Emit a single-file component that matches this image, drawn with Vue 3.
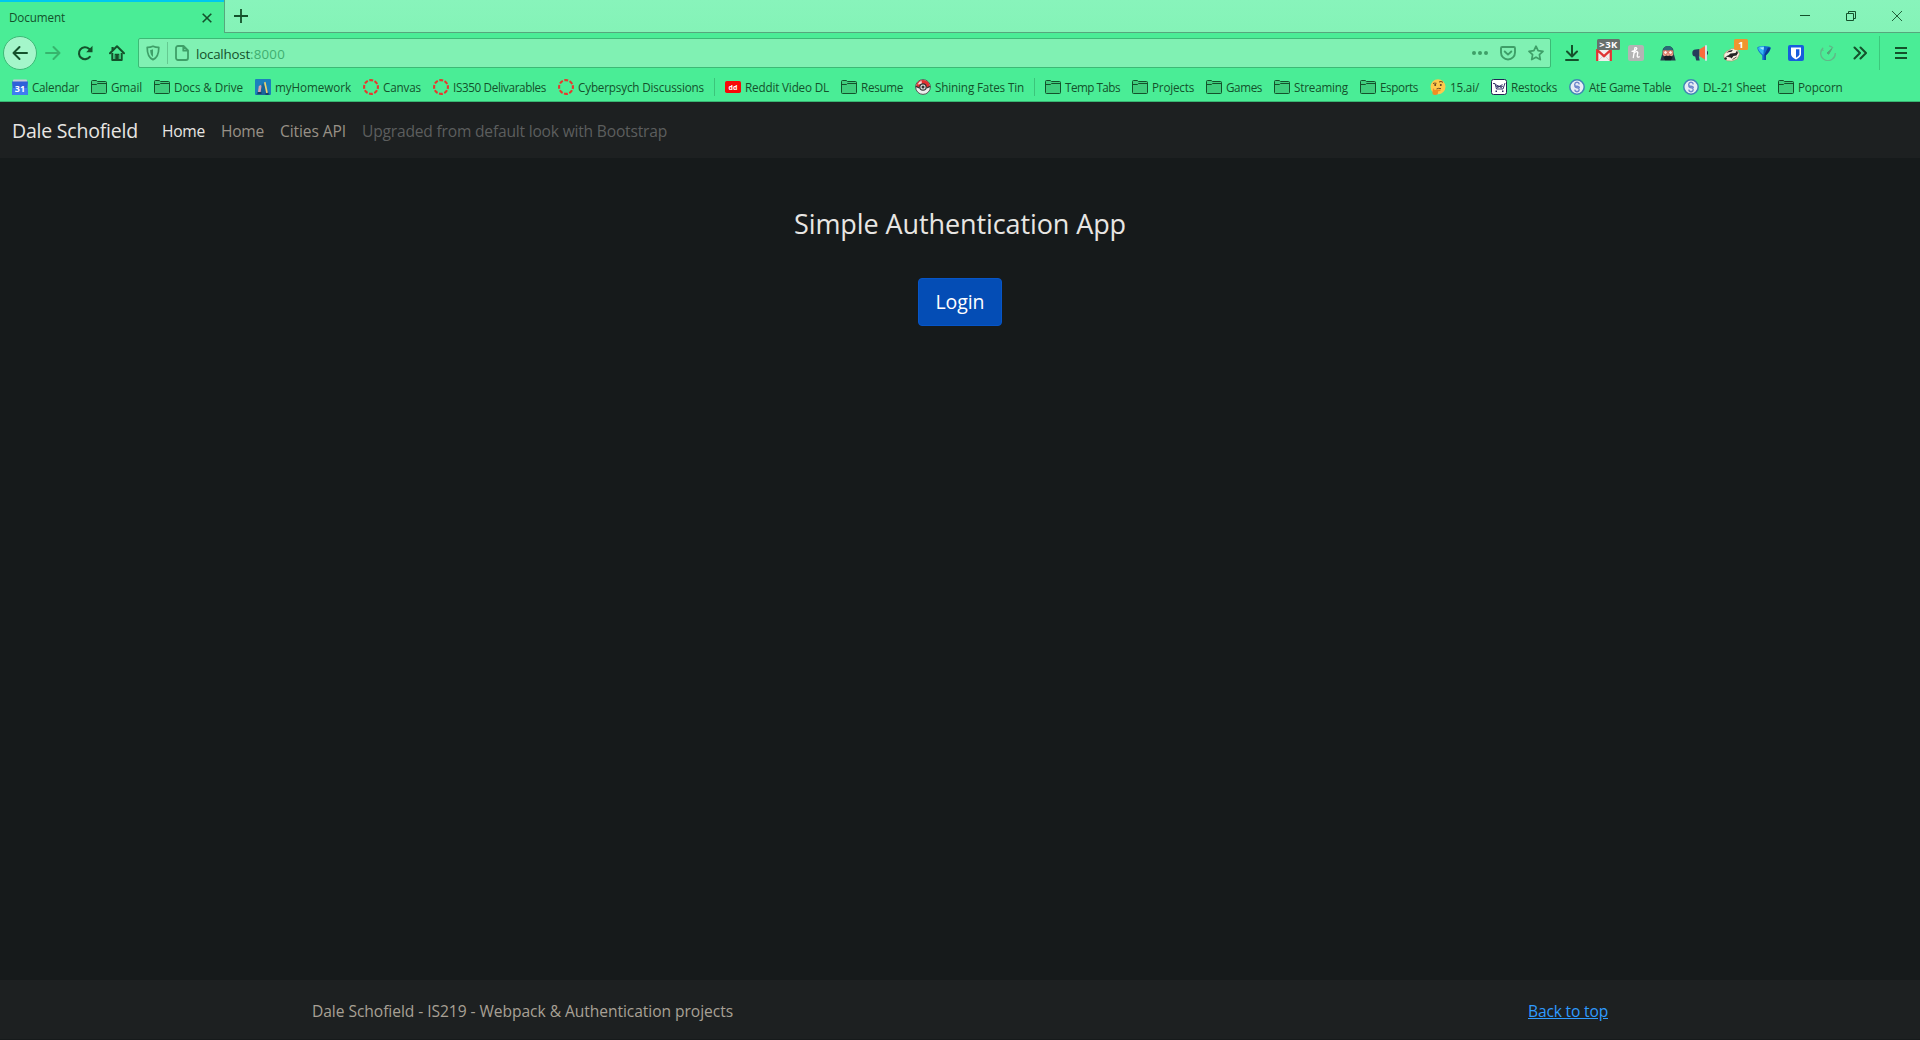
<script setup>
const vFit = {
  mounted(el, { value }) {
    const natural = el.getBoundingClientRect().width
    el.style.letterSpacing = (value - natural) / el.textContent.length + 'px'
    el.style.width = value + 'px'
  }
}

const bookmarks = [
  { t: 'Calendar', w: 47, i: 'calendar' },
  { t: 'Gmail', w: 31, i: 'folder' },
  { t: 'Docs & Drive', w: 69, i: 'folder' },
  { t: 'myHomework', w: 76, i: 'homework' },
  { t: 'Canvas', w: 38, i: 'canvas' },
  { t: 'IS350 Delivarables', w: 93, i: 'canvas' },
  { t: 'Cyberpsych Discussions', w: 126, i: 'canvas' },
  { sep: true },
  { t: 'Reddit Video DL', w: 84, i: 'reddit' },
  { t: 'Resume', w: 42, i: 'folder' },
  { t: 'Shining Fates Tin', w: 89, i: 'ball' },
  { sep: true },
  { t: 'Temp Tabs', w: 55, i: 'folder' },
  { t: 'Projects', w: 42, i: 'folder' },
  { t: 'Games', w: 36, i: 'folder' },
  { t: 'Streaming', w: 54, i: 'folder' },
  { t: 'Esports', w: 38, i: 'folder' },
  { t: '15.ai/', w: 29, i: 'think' },
  { t: 'Restocks', w: 46, i: 'cart' },
  { t: 'AtE Game Table', w: 82, i: 'sheet' },
  { t: 'DL-21 Sheet', w: 63, i: 'sheet' },
  { t: 'Popcorn', w: 44.5, i: 'folder' }
]
</script>

<template>
  <div class="window">
    <header class="chrome">
      <div class="tabstrip">
        <div class="tab">
          <span v-fit="56" class="txt">Document</span>
          <svg width="10" height="10" viewBox="0 0 10 10" class="ink"><path d="M.7.7l8.6 8.6M9.3.7L.7 9.3" stroke-width="1.6" /></svg>
        </div>
        <div class="rest">
          <svg class="ink" width="14" height="14" viewBox="0 0 14 14"><path d="M7 0v14M0 7h14" stroke-width="1.8" /></svg>
          <div class="controls">
            <svg width="10" height="10" viewBox="0 0 10 10" class="ink"><path d="M0 4.500h10" /></svg>
            <svg width="10" height="10" viewBox="0 0 10 10" class="ink"><path d="M.5 2.500h7v7h-7zM2.500 2.500v-2h7v7h-2" /></svg>
            <svg width="10" height="10" viewBox="0 0 10 10" class="ink"><path d="M0 0l10 10M10 0L0 10" stroke-width=".9" /></svg>
          </div>
        </div>
      </div>

      <div class="toolbar">
        <div class="back"><svg width="16" height="16" viewBox="0 0 16 16" class="ink"><path d="M15 8H1.500M7.500 2L1.500 8l6 6" stroke-width="2" stroke-linecap="round" stroke-linejoin="round" /></svg></div>
        <div class="tool fwd"><svg width="16" height="16" viewBox="0 0 16 16" class="ink dim"><path d="M1 8h13.500M8.500 2l6 6-6 6" stroke-width="2" stroke-linecap="round" stroke-linejoin="round" /></svg></div>
        <div class="tool"><svg width="16" height="16" viewBox="0 0 16 16" class="ink"><path d="M12.800 11.800A6 6 0 1 1 12 3.700L13.500 5" stroke-width="2.100" stroke-linecap="round" /><path d="M15.500 .8v6.400H9.200z" fill="#14512b" stroke="none" /></svg></div>
        <div class="tool"><svg width="16" height="16" viewBox="0 0 16 16" class="ink"><path d="M1 8.200L8 1.300l7 6.900" stroke-width="2" stroke-linecap="round" stroke-linejoin="round" /><path d="M3.300 8v6.900h9.400V8" stroke-width="2" stroke-linejoin="round" /><path d="M8 15v-5M3.600 2v3" stroke-width="2.200" /><path d="M6.200 14V9.400h3.600V14" stroke-width="1.100" /></svg></div>
        <div class="url">
          <svg width="14" height="16" viewBox="0 0 14 16" class="soft"><path d="M7 1.200c2 .9 4 1.300 5.800 1.200 0 6-1.200 10.200-5.800 12.200C2.400 12.600 1.200 8.400 1.200 2.400 3 2.500 5 2.100 7 1.200z" stroke-width="1.700" stroke-linejoin="round" /><path d="M7 4.200v7.700C5 10.500 4.200 8.400 4.200 5c1 0 2-.3 2.800-.8z" fill="#3e9f68" stroke="none" /></svg>
          <i class="bar"></i>
          <svg width="14" height="16" viewBox="0 0 14 16" class="soft"><path d="M3 1h5.500L13 5.500V13a2 2 0 0 1-2 2H3a2 2 0 0 1-2-2V3a2 2 0 0 1 2-2zM8.300 1v4.700H13" stroke-width="1.800" stroke-linejoin="round" /></svg>
          <span class="addr"><span v-fit="54" class="txt">localhost</span><span v-fit="35" class="txt port">:8000</span></span>
          <div class="actions">
            <svg width="16" height="16" viewBox="0 0 16 16"><g fill="#3e9f68"><circle cx="2" cy="8" r="2" /><circle cx="8" cy="8" r="2" /><circle cx="14" cy="8" r="2" /></g></svg>
            <svg width="16" height="16" viewBox="0 0 16 16" class="soft"><path d="M2.200 2h11.600q1.200 0 1.200 1.200V7.500a7 7 0 0 1-14 0V3.200Q1 2 2.200 2z" stroke-width="1.900" /><path d="M4.700 6.500L8 9.600l3.300-3.100" stroke-width="1.900" stroke-linecap="round" stroke-linejoin="round" /></svg>
            <svg width="16" height="16" viewBox="0 0 16 16" class="soft"><path d="M8 1.200l2.100 4.500 4.900.6-3.600 3.400.9 4.900L8 12.200l-4.300 2.400.9-4.900L1 6.300l4.900-.6z" stroke-width="1.700" stroke-linejoin="round" /></svg>
          </div>
        </div>
        <div class="exts">
          <div class="tool"><svg width="14" height="16" viewBox="0 0 14 16" class="ink"><path d="M7 .5V11M2 6.500l5 5 5-5M1 15h12" stroke-width="2" stroke-linecap="round" stroke-linejoin="round" /></svg></div>
          <div class="tool">
            <svg width="16" height="12" viewBox="0 0 16 12" class="low"><path fill="#f2eeee" d="M0 0h16v12H0z" /><path d="M3 11l4-4M13 11L9 7" stroke="#ccc" stroke-width=".8" /><path d="M1.200 12V1L8 7.200 14.800 1v11" fill="none" stroke="#e03434" stroke-width="2.300" /></svg>
            <span class="badge grey">&gt;3K</span>
          </div>
          <div class="tool"><svg width="16" height="16" viewBox="0 0 16 16"><rect width="16" height="16" rx="2.500" fill="#b4b4b4" /><path d="M6.800 3L5.300 12.500M6.200 8Q9 5.500 9.800 7.500L9.200 11q0 1.700 2 .8M4 6.300Q8 6 8.800 3.500 8 2.200 6.800 3" fill="none" stroke="#fff" stroke-width="1.300" stroke-linecap="round" /></svg></div>
          <div class="tool"><svg width="16" height="16" viewBox="0 0 16 16"><path d="M2.500 8V6a5.500 5 0 0 1 11 0v2l2.200 7.500H.3z" fill="#263b4a" /><path d="M3 5.500Q4 1 8 1t5 4.500z" fill="#2b6a78" /><path d="M2.800 5.500h10.400v4.500l-2.500 2H5.300l-2.500-2z" fill="#e9a28a" /><circle cx="5.500" cy="7.500" r="1.900" fill="#fff0e8" stroke="#d0503f" stroke-width=".8" /><circle cx="10.500" cy="7.500" r="1.900" fill="#fff0e8" stroke="#d0503f" stroke-width=".8" /><path d="M3.500 12Q6 9.500 8 11q2-1.500 4.500 1l-1.500 3.300H5z" fill="#161c24" /></svg></div>
          <div class="tool"><svg width="16" height="16" viewBox="0 0 16 16"><path d="M7.500 4v7.500H6.800l.9 4H4.200l-1-4Q.3 11.500.3 8T3.500 4.500z" fill="#263c5b" /><path d="M7.500 4.300L13 1v13.500l-5.500-3.200z" fill="#fb6a3c" /><path d="M13 .3h2v15.400h-2z" fill="#d8e2e8" /><path d="M15 6.300h1v3.200h-1z" fill="#263c5b" /></svg></div>
          <div class="tool">
            <svg width="18" height="15" viewBox="0 0 18 15" class="low"><path d="M1 7.500L3.500 4.500 9 1.500l5 .5 2.500 5-2.500 5-5 2-5-.3L1 11z" fill="#f7efe2" stroke="#b98a60" stroke-width=".6" /><path d="M3 6Q6 3 10 2.800L8.500 4.800Q5 5 3 6zM2.500 9.500Q6 8.500 7.500 6.500l5-.5 1.500-2.500 1 2.500-1.500 2.500-3 .5-2 2.500-1-1z" fill="#252525" /><circle cx="2.600" cy="11.500" r="1.300" fill="#252525" /><path d="M9.500 12.500l4-2.500" stroke="#5d4d40" /></svg>
            <span class="badge orange">1</span>
          </div>
          <div class="tool"><svg width="14" height="16" viewBox="0 0 14 16"><path d="M.3 2.500Q2 1 7 1t6.700 1.500q0 3.500-4.900 8V15H5.300v-4.500Q.3 6 .3 2.500z" fill="#1169d0" /><path d="M1 2.700Q3 1.300 7 1.300L6.300 10Q1 5.500 1 2.700z" fill="#35b8f0" /><path d="M2.500 2.700Q4.500 2 7 2.200L6.300 5z" fill="#a7eafd" /><path d="M11 2.500l2.500.2q0 3-4.700 7.800V15H7.500V9.500z" fill="#0a3b8f" /></svg></div>
          <div class="tool"><svg width="16" height="16" viewBox="0 0 16 16"><rect width="16" height="16" rx="2" fill="#175ddc" /><path d="M3 2.500h10V9q0 3-5 5.500Q3 12 3 9z" fill="#fff" /><path d="M8 4.200h3.400v5Q11.400 11 8 12.700z" fill="#175ddc" /></svg></div>
          <div class="tool"><svg width="16" height="16" viewBox="0 0 16 16"><path d="M3.200 2.800A7.300 7.300 0 1 0 15.300 8M9 .8A7.300 7.300 0 0 1 13 3M1.500 4.500l2 1" stroke="#60b988" stroke-width="1.300" fill="none" /><path d="M12 3.500L8.700 9.200 7 8z" fill="#54a879" stroke="#54a879" /></svg></div>
          <div class="tool"><svg width="14" height="14" viewBox="0 0 14 14" class="ink"><path d="M1.500 1.500L7 7l-5.500 5.500M7.500 1.500L13 7l-5.500 5.500" stroke-width="2" stroke-linecap="round" stroke-linejoin="round" /></svg></div>
        </div>
        <div class="menu"><svg width="12" height="12" viewBox="0 0 12 12" class="ink"><path d="M0 1h12M0 6h12M0 11h12" stroke-width="2" /></svg></div>
      </div>

      <nav class="bookmarks">
        <template v-for="(b, n) in bookmarks" :key="n">
          <i v-if="b.sep" class="sep"></i>
          <a v-else class="bm">
            <svg width="16" height="16" viewBox="0 0 16 16">
              <template v-if="b.i === 'folder'">
                <path d="M.5 13.500V2.500q0-1 1-1h3.800l1.200 1h8q1 0 1 1v10q0 1-1 1h-13q-1 0-1-1z" fill="#3fcd7d" stroke="#14512b" />
                <path d="M.5 5.500h5l1-1h9" fill="none" stroke="#14512b" />
              </template>
              <template v-else-if="b.i === 'calendar'">
                <path d="M1 1.500Q1 .5 2 .5h12q1 0 1 1V4H1z" fill="#c7cbd9" /><path d="M0 2.500h16L15.500 9l.5 6q0 1-1 1H1q-1 0-1-1l.5-6z" fill="#2f60d8" /><path d="M.5 9h15l.5 6q0 1-1 1H1q-1 0-1-1z" fill="#3f7df0" />
                <text x="8" y="12.500" text-anchor="middle" class="cal">31</text>
              </template>
              <template v-else-if="b.i === 'homework'">
                <rect width="16" height="16" rx="1" fill="#1b80bd" /><path d="M1 16L8 4l7 12z" fill="#18669a" /><path d="M3 13l.8-6 2-1 .7 1-.8 6z" fill="#d9a3ad" /><path d="M9 3.500l1.500-.7 2.300 10.700-1.500 1z" fill="#f2d36a" /><path d="M2.500 14h4M10.500 15h3" stroke="#173755" stroke-width="1.300" />
              </template>
              <circle v-else-if="b.i === 'canvas'" cx="8" cy="8" r="6.900" fill="none" stroke="#e8382c" stroke-width="2.100" stroke-dasharray="3.900 1.519" stroke-dashoffset="1.950" />
              <template v-else-if="b.i === 'reddit'">
                <rect y="2" width="16" height="12" rx="1.800" fill="#f80808" /><text x="8" y="10.500" text-anchor="middle" class="dd">dd</text>
              </template>
              <template v-else-if="b.i === 'ball'">
                <circle cx="8" cy="8" r="7.400" fill="#eee" stroke="#555" /><path d="M1 8a7 7 0 0 1 14 0z" fill="#e03030" /><path d="M2.500 5.500Q4 2.500 6.500 1.800L7 5z" fill="#fff" opacity=".8" /><path d="M.8 7.300L4.500 9M15.200 7.300L11.500 9" fill="none" stroke="#333" stroke-width="1.300" /><circle cx="8" cy="8" r="3.800" fill="#333" /><circle cx="8" cy="8" r="2.600" fill="#e4e4e4" /><circle cx="8" cy="8" r="1.500" fill="#333" />
              </template>
              <template v-else-if="b.i === 'think'">
                <circle cx="8" cy="7.700" r="7.500" fill="#fdc94c" /><circle cx="5.200" cy="6" r="1" fill="#5b3a20" /><circle cx="10.800" cy="6" r="1" fill="#5b3a20" /><path d="M3 4.500Q4.500 3.800 6.500 4.300M9 3Q11 1.800 13 3.300M6.500 10q2-1.200 4.500-.3" fill="none" stroke="#6f451e" /><path d="M3 9.500q1-.5 1.500 1.500l5.500-.5q1.500.7 0 1.500l-2 .5q.5 3.500-2.800 3.500T2.500 13z" fill="#f28d23" />
              </template>
              <template v-else-if="b.i === 'cart'">
                <rect x=".5" y=".5" width="15" height="15" rx="2" fill="#fff" stroke="#222352" /><path d="M2 4.500h2l1.500 5.500H12M4.500 5.500L11 9M11.500 5.500L6 9M5 7.300h7M14 4l-2 6" fill="none" stroke="#25245e" stroke-width=".9" /><path d="M4.500 11.500h1.500V13H4.500zM11 11.500h1.500V13H11z" fill="#25245e" />
              </template>
              <template v-else>
                <circle cx="8" cy="8" r="7.200" fill="#e8edf5" stroke="#3f86b4" stroke-width="1.500" /><path d="M10.300 5.300Q10 3.300 8 3.300T5.700 5.300 8 7.300t2.300 1.700M10.300 10.700Q10 12.700 8 12.700T5.700 10.700M5.700 7Q6 8.700 8 8.700t2.300 2" fill="none" stroke="#6f88cc" stroke-width="1.400" />
              </template>
            </svg>
            <span v-fit="b.w" class="txt">{{ b.t }}</span>
          </a>
        </template>
      </nav>
    </header>

    <nav class="navbar">
      <a v-fit="126" class="txt brand">Dale Schofield</a>
      <a v-fit="43" class="txt active">Home</a>
      <a v-fit="43" class="txt">Home</a>
      <a v-fit="66" class="txt">Cities API</a>
      <a v-fit="305" class="txt disabled">Upgraded from default look with Bootstrap</a>
    </nav>

    <main>
      <h3 v-fit="332" class="txt">Simple Authentication App</h3>
      <button><span v-fit="49" class="txt">Login</span></button>
    </main>

    <footer>
      <div class="container">
        <span v-fit="421" class="txt">Dale Schofield - IS219 - Webpack &amp; Authentication projects</span>
        <a v-fit="80" class="txt">Back to top</a>
      </div>
    </footer>
  </div>
</template>

<style>
body { margin: 0; background: #161a1b; overflow: hidden; }
</style>

<style scoped>
.window { width: 1920px; height: 1040px; overflow: hidden; display: flex; flex-direction: column; font-family: "Open Sans", "Noto Sans", sans-serif; background: #161a1b; }
.window * { box-sizing: border-box; }
.txt { display: inline-block; white-space: nowrap; }
svg { display: block; flex: none; }
.ink { fill: none; stroke: #14512b; }
.dim { stroke: #36b56d; }
.soft { fill: none; stroke: #3e9f68; }
.chrome { height: 102px; background: #4aed96; border-bottom: 1px solid #38b673; color: #14512b; font-size: 11.700px; }
.tabstrip { display: flex; height: 33px; }
.tab { width: 224px; border-top: 2px solid #00c8ef; display: flex; align-items: center; justify-content: space-between; padding: 0 12px 0 9px; }
.tab .txt { padding-bottom: 2px; }
.rest { flex: 1; display: flex; justify-content: space-between; align-items: center; background: linear-gradient(#88f4bb, #84f3b7); border-left: 1px solid #56a77d; border-bottom: 1px solid #56a77d; padding: 0 18px 0 9px; }
.controls { display: flex; gap: 36px; }
.toolbar { display: flex; height: 40px; align-items: center; padding-left: 3px; }
.back { width: 34px; height: 34px; border-radius: 50%; background: #a4f6ca; border: 1px solid #3cba76; display: flex; align-items: center; justify-content: center; }
.tool { width: 32px; height: 32px; display: flex; align-items: center; justify-content: center; position: relative; }
.url { margin-left: 5px; width: 1413px; height: 30px; background: #80f1b3; border: 1px solid #3cba76; border-radius: 2px; display: flex; align-items: center; padding: 0 6px 0 7px; }
.bar { width: 1px; height: 22px; background: #65c991; margin: 0 7px; }
.addr { margin-left: 7px; font-size: 13.300px; line-height: 28px; display: flex; padding-top: 1px; }
.port { color: #3fae70; }
.actions { margin-left: auto; display: flex; gap: 12px; }
.exts { display: flex; margin-left: 5px; }
.exts .low { margin-top: 3px; }
.badge { position: absolute; top: 2px; height: 11px; line-height: 11px; font-size: 9.500px; font-weight: 700; color: #fff; text-align: center; border-radius: 1.500px; }
.grey { left: 9px; width: 23px; background: #66706b; letter-spacing: .4px; }
.orange { left: 18px; width: 14px; background: #f09430; }
.menu { margin-left: 3px; height: 34px; border-left: 1px solid #3cc97c; width: 41px; display: flex; align-items: center; padding-left: 15px; }
.bookmarks { display: flex; height: 28px; align-items: center; padding-left: 12px; }
.bm { display: flex; align-items: center; gap: 4px; margin-right: 12px; height: 20px; line-height: 18px; }
.bm .txt { padding-bottom: 1px; }
.sep { width: 1px; height: 18px; background: #3cc57b; margin: 0 10px 0 -2px; }
.cal { font: 700 9px "Open Sans", sans-serif; fill: #fff; }
.dd { font: 700 7px "Open Sans", sans-serif; fill: #fff; }
.navbar { height: 56px; background: #1d2021; display: flex; align-items: center; padding: 2px 0 0 12px; font-size: 15.600px; line-height: 24px; color: #989187; }
.navbar a { margin-right: 16px; }
.navbar .brand { font-size: 19.500px; line-height: 30px; color: #e8e6e3; margin-right: 24px; }
.navbar .active { color: #e8e6e3; }
.navbar .disabled { color: #5c5e5e; }
main { flex: 1; display: flex; flex-direction: column; align-items: center; padding-top: 49px; color: #e8e6e3; }
h3 { margin: 0; font-size: 27px; font-weight: 400; line-height: 34px; }
button { margin-top: 37px; width: 84px; height: 48px; padding: 0; background: #044db5; border: 1px solid #0655c8; border-radius: 4px; color: #fff; font: 19.500px/30px "Open Sans", sans-serif; }
footer { height: 60px; background: #1d2021; border-bottom: 1px solid #161a1b; }
.container { width: 1296px; height: 59px; margin: 0 auto; display: flex; align-items: center; justify-content: space-between; padding-top: 3px; font-size: 15.600px; line-height: 24px; color: #a8a095; }
.container a { color: #2f9bff; text-decoration: underline; }
</style>
